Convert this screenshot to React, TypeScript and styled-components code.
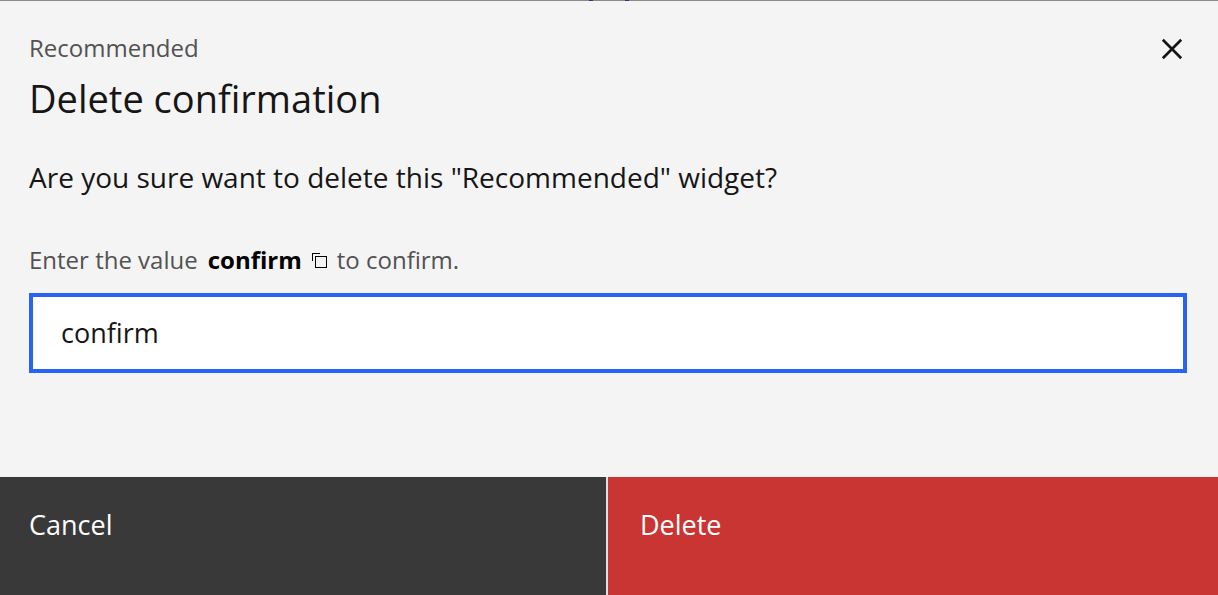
import React, { useState } from "react";
import styled, { createGlobalStyle } from "styled-components";

const GlobalStyle = createGlobalStyle`
  *, *::before, *::after { box-sizing: border-box; }
  body {
    margin: 0;
    background: #f4f4f4;
    color: #161616;
    font-family: "Open Sans", "Noto Sans", sans-serif;
    font-size: 27px;
  }
`;

const Backdrop = styled.div`
  display: flex;
  justify-content: center;
  gap: 32px;
  height: 1px;
  background: #8a8889;
`;

const BackdropMark = styled.span`
  width: 4px;
  background: #1f3a93;
`;

const Header = styled.header`
  display: flex;
  align-items: flex-start;
  justify-content: space-between;
  padding: 32px 30px 0 29px;
`;

const Label = styled.p`
  margin: 0;
  color: #525252;
  font-size: 24px;
  line-height: 30px;
`;

const Title = styled.h1`
  margin: 8px 0 0;
  font-size: 38px;
  font-weight: 400;
  line-height: 54px;
`;

const IconButton = styled.button`
  display: flex;
  padding: 0;
  border: 0;
  background: none;
  color: inherit;
  cursor: pointer;
`;

const Content = styled.main`
  padding: 32px 31px 104px 29px;
`;

const Question = styled.p`
  margin: 0;
  font-size: 28px;
  line-height: 40px;
`;

const FieldLabel = styled.div`
  display: flex;
  align-items: center;
  gap: 10px;
  margin: 48px 0 18px;
  color: #525252;
  font-size: 24px;
  line-height: 30px;
`;

const Keyword = styled.strong`
  color: #000000;
  font-weight: 700;
`;

const TextInput = styled.input`
  display: block;
  width: 100%;
  height: 80px;
  padding: 0 28px 2px;
  border: 4px solid #2962f6;
  border-radius: 0;
  outline: none;
  background: #ffffff;
  color: #161616;
  font: inherit;
`;

const Footer = styled.footer`
  display: grid;
  grid-template-columns: 606fr 610fr;
  gap: 2px;
  background: #e0e0e0;
`;

const ActionButton = styled.button<{ $danger?: boolean }>`
  padding: 28px ${(p) => (p.$danger ? 32 : 29)}px 50px;
  border: 0;
  background: ${(p) => (p.$danger ? "#c93532" : "#393939")};
  color: #ffffff;
  font: inherit;
  line-height: 40px;
  text-align: left;
  cursor: pointer;
`;

export default function App() {
  const [value, setValue] = useState("confirm");

  return (
    <>
      <GlobalStyle />
      <Backdrop>
        <BackdropMark />
        <BackdropMark />
      </Backdrop>
      <section role="dialog" aria-labelledby="dialog-title">
        <Header>
          <div>
            <Label>Recommended</Label>
            <Title id="dialog-title">Delete confirmation</Title>
          </div>
          <IconButton type="button" aria-label="Close">
            <svg width="32" height="32" viewBox="0 0 32 32" fill="none" stroke="currentColor" strokeWidth="2.7">
              <path d="M6.8 6.8 25.2 25.2M25.2 6.8 6.8 25.2" />
            </svg>
          </IconButton>
        </Header>
        <Content>
          <Question>Are you sure want to delete this "Recommended" widget?</Question>
          <FieldLabel>
            <label htmlFor="confirm-value">Enter the value</label>
            <Keyword>confirm</Keyword>
            <IconButton type="button" aria-label="Copy">
              <svg width="15" height="15" viewBox="0 0 15 15" fill="none" stroke="#000000" shapeRendering="crispEdges">
                <path d="M0.5 8V0.5H8" />
                <path d="M3.5 3.5H14.5V14.5H3.5Z" />
              </svg>
            </IconButton>
            <span>to confirm.</span>
          </FieldLabel>
          <TextInput
            id="confirm-value"
            type="text"
            value={value}
            onChange={(e) => setValue(e.target.value)}
          />
        </Content>
        <Footer>
          <ActionButton type="button">Cancel</ActionButton>
          <ActionButton type="button" $danger>Delete</ActionButton>
        </Footer>
      </section>
    </>
  );
}
